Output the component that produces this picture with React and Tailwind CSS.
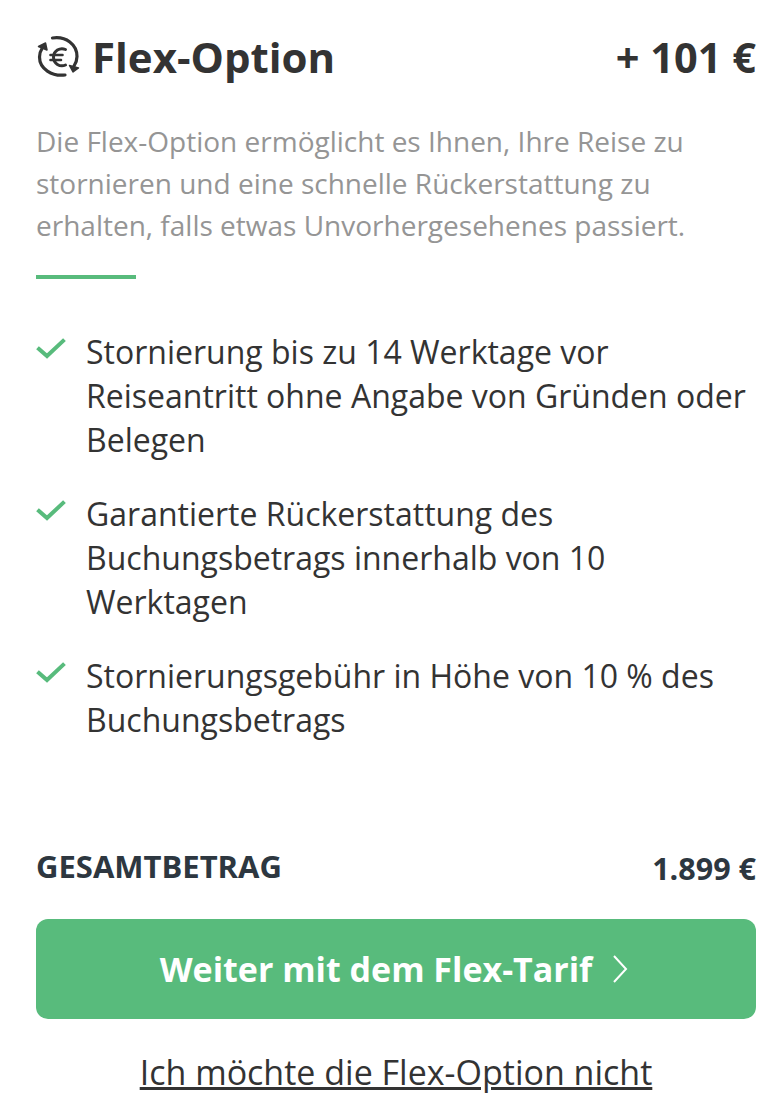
import React from 'react'

const BENEFITS = [
  'Stornierung bis zu 14 Werktage vor Reiseantritt ohne Angabe von Gründen oder Belegen',
  'Garantierte Rückerstattung des Buchungsbetrags innerhalb von 10 Werktagen',
  'Stornierungsgebühr in Höhe von 10 % des Buchungsbetrags',
]

// Two circular arrows around a euro sign
function FlexIcon() {
  return (
    <svg className="shrink-0" width="46" height="44" viewBox="0 0 46 44" fill="none" stroke="#333333" strokeWidth="3.2" strokeLinecap="round" strokeLinejoin="round">
      <path d="M29 40C16 41.500 3.500 34 3.500 22c0-3 .800-6 3-9.500" />
      <path d="M2.500 11.500L9.500 8l1.500 7z" fill="#333333" strokeWidth="1.500" />
      <path d="M16.500 3C30 1 41 9.500 41 21.500c0 3-.800 6-3 9.500" />
      <path d="M33.500 30.500L37 37l5.500-4z" fill="#333333" strokeWidth="1.500" />
      <path d="M29.500 14.500a8.500 8.500 0 1 0 0 15.500" strokeWidth="3" />
      <path d="M14.500 20h12M14.500 25h10.500" strokeWidth="2.600" />
    </svg>
  )
}

function Check() {
  return (
    <svg className="mt-[7px] shrink-0" width="30" height="24" viewBox="0 0 30 24" fill="none" stroke="#58bb7c" strokeWidth="4" strokeLinecap="square">
      <path d="M3 12l8 7L27 4" />
    </svg>
  )
}

export default function App() {
  return (
    <div className="min-h-[1118px] bg-white pl-9 pr-7 pt-8 font-['Open_Sans',sans-serif] text-[#333333]">
      <div className="flex items-center justify-between">
        <h1 className="flex items-center gap-[10px] text-[42px] leading-[50px] font-bold">
          <FlexIcon />
          Flex-Option
        </h1>
        <span className="text-[41.5px] leading-[50px] font-bold">+ 101 €</span>
      </div>

      <p className="mt-[38px] text-[28px] leading-[42px] text-[#959595]">
        Die Flex-Option ermöglicht es Ihnen, Ihre Reise zu stornieren und eine schnelle Rückerstattung zu erhalten, falls etwas Unvorhergesehenes passiert.
      </p>

      <div className="mt-[29px] h-1 w-[100px] bg-[#58bb7c]" />

      <ul className="mt-[51px] flex flex-col gap-[30px]">
        {BENEFITS.map((text) => (
          <li key={text} className="flex gap-5 text-[32px] leading-[44px]">
            <Check />
            <span>{text}</span>
          </li>
        ))}
      </ul>

      <div className="mt-[101px] flex items-center justify-between font-bold text-[#2d3740]">
        <span className="text-[31px] leading-10">GESAMTBETRAG</span>
        <span className="pt-[5px] text-[30.5px] leading-10">1.899 €</span>
      </div>

      <button className="mt-[31px] flex h-[100px] w-full items-center justify-center gap-5 rounded-xl bg-[#58bb7c] pr-1 text-[34px] font-bold text-white">
        Weiter mit dem Flex-Tarif
        <svg width="16" height="30" viewBox="0 0 16 30" fill="none" stroke="#fff" strokeWidth="2">
          <path d="M2 2l12 13L2 28" />
        </svg>
      </button>

      <div className="mt-[28px] text-center text-[34px] underline">Ich möchte die Flex-Option nicht</div>
    </div>
  )
}
